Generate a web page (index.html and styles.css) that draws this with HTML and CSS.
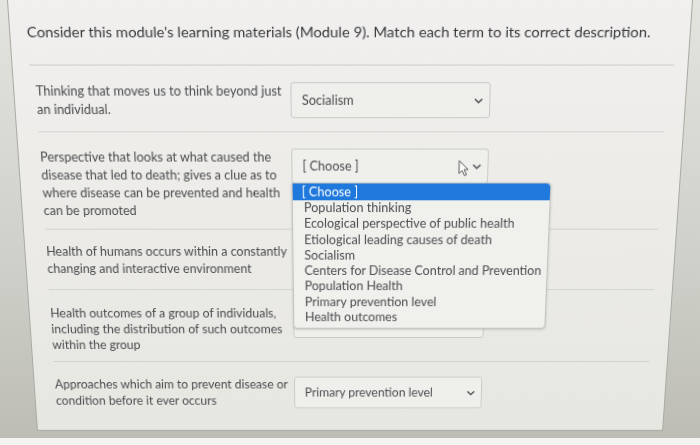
FILE: index.html
```html
<!DOCTYPE html>
<html lang="en">
<head>
<meta charset="utf-8">
<title>Matching question</title>
<link rel="stylesheet" href="styles.css">
</head>
<body>
<div class="stage">
  <div class="panel">
    <p class="title">Consider this module's learning materials (Module 9). Match each term to its correct description.</p>
    <div class="rows">
      <div class="row row-1">
        <div class="label">Thinking that moves us to think beyond just an individual.</div>
        <div class="select"><span class="value">Socialism</span><svg class="chev" viewBox="0 0 10 6" width="9" height="6"><path d="M1 1 L5 5 L9 1" fill="none" stroke="#4d4f52" stroke-width="1.6"/></svg></div>
      </div>
      <div class="row row-2">
        <div class="label">Perspective that looks at what caused the disease that led to death; gives a clue as to where disease can be prevented and health can be promoted</div>
        <div class="select open"><span class="value">[ Choose ]</span><svg class="chev" viewBox="0 0 10 6" width="9" height="6"><path d="M1 1 L5 5 L9 1" fill="none" stroke="#4d4f52" stroke-width="1.6"/></svg>
          <svg class="cursor" viewBox="0 0 11 17" width="11" height="17"><path d="M1 1 L1 14 L4 11 L6.5 16 L8.5 15 L6 10 L10 10 Z" fill="#fafafa" stroke="#5a5c5e" stroke-width="1"/></svg>
          <ul class="menu">
            <li class="active">[ Choose ]</li>
            <li>Population thinking</li>
            <li>Ecological perspective of public health</li>
            <li>Etiological leading causes of death</li>
            <li>Socialism</li>
            <li>Centers for Disease Control and Prevention</li>
            <li>Population Health</li>
            <li>Primary prevention level</li>
            <li>Health outcomes</li>
          </ul>
        </div>
      </div>
      <div class="row row-3">
        <div class="label">Health of humans occurs within a constantly changing and interactive environment</div>
        <div class="select"><span class="value">[ Choose ]</span><svg class="chev" viewBox="0 0 10 6" width="9" height="6"><path d="M1 1 L5 5 L9 1" fill="none" stroke="#4d4f52" stroke-width="1.6"/></svg></div>
      </div>
      <div class="row row-4">
        <div class="label">Health outcomes of a group of individuals, including the distribution of such outcomes within the group</div>
        <div class="select"><span class="value">[ Choose ]</span><svg class="chev" viewBox="0 0 10 6" width="9" height="6"><path d="M1 1 L5 5 L9 1" fill="none" stroke="#4d4f52" stroke-width="1.6"/></svg></div>
      </div>
      <div class="row row-5">
        <div class="label">Approaches which aim to prevent disease or condition before it ever occurs</div>
        <div class="select"><span class="value">Primary prevention level</span><svg class="chev" viewBox="0 0 10 6" width="9" height="6"><path d="M1 1 L5 5 L9 1" fill="none" stroke="#4d4f52" stroke-width="1.6"/></svg></div>
      </div>
    </div>
  </div>
</div>
</body>
</html>
```
FILE: styles.css
```css
html, body {
  margin: 0;
  padding: 0;
  width: 700px;
  height: 445px;
  overflow: hidden;
}
html {
  background: linear-gradient(to bottom, #e4e4df 0%, #cfcfc9 60%, #bdbdb6 98.4%, #f4f4f2 98.5%);
}
body {
  font-family: Lato, "Open Sans", sans-serif;
  color: #4a4c4f;
}
.stage {
  width: 700px;
  height: 460px;
  transform-origin: 50% 216px;
  transform: perspective(1000px) rotateX(-12deg);
}
.panel {
  margin: 0 22px;
  height: 446px;
  box-sizing: border-box;
  border: 1px solid #a9aaa4;
  border-top: none;
  background: linear-gradient(to bottom, #f2f0ef 0%, #ecebe7 50%, #e7e7e2 100%);
  padding: 0 13px 0 16px;
}
.title {
  margin: 0;
  padding: 25px 0 21px;
  font-size: 14.3px;
  line-height: 20px;
  color: #37393c;
  white-space: nowrap;
  border-bottom: 1px solid #cbccc6;
}
.rows {
  margin: 0 5px;
}
.row {
  display: grid;
  grid-template-columns: 244px 195px;
  column-gap: 4px;
  align-items: start;
  padding: 16px 0 9px;
  border-bottom: 1px solid #d2d3cd;
  font-size: 12.5px;
  line-height: 18px;
}
.row-3 {
  padding-top: 14px;
}
.row-4 {
  line-height: 17px;
}
.row:last-child {
  border-bottom: none;
}
.select {
  position: relative;
  height: 35px;
  margin-bottom: 4px;
  box-sizing: border-box;
  border: 1px solid #c9cbc7;
  border-radius: 3px;
  background: #efefec;
  display: flex;
  align-items: center;
  justify-content: space-between;
  padding: 0 6px 0 10px;
  font-size: 12.5px;
  line-height: 18px;
  color: #4a4c4f;
}
.cursor {
  position: absolute;
  left: 164px;
  top: 10px;
}
.menu {
  position: absolute;
  left: -1px;
  top: 33px;
  width: 256px;
  margin: 0;
  padding: 0 0 3px;
  list-style: none;
  background: #f0f0ed;
  border: 1px solid #c3c4bf;
  border-radius: 0 4px 4px 4px;
  box-shadow: 0 1px 3px rgba(0, 0, 0, 0.18);
  font-size: 12.6px;
  line-height: 16.3px;
  color: #4a4c4f;
  z-index: 5;
}
.menu li {
  padding-left: 11px;
  white-space: nowrap;
}
.menu li.active {
  background: #1f78dc;
  color: #ffffff;
  border-radius: 0 4px 0 0;
  padding-left: 9px;
  line-height: 17px;
}
```
